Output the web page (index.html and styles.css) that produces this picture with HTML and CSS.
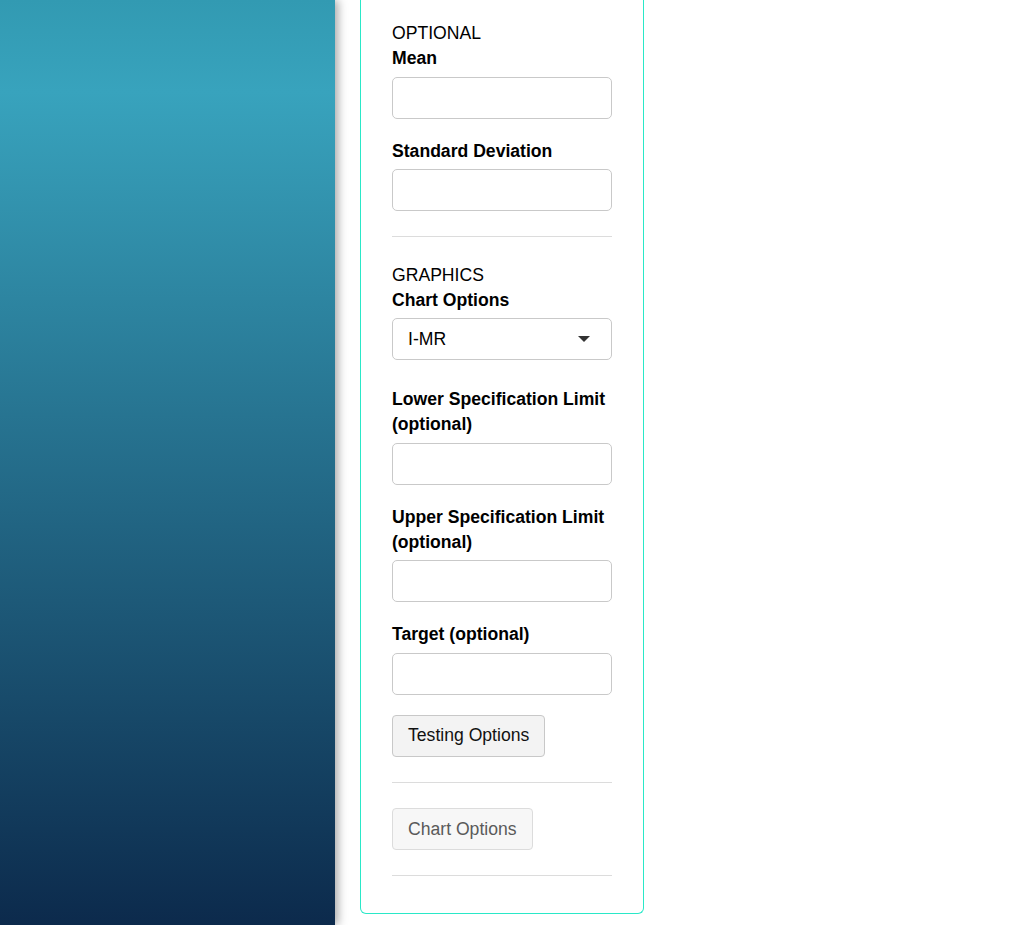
FILE: index.html
```html
<!DOCTYPE html>
<html>
<head>
<meta charset="utf-8">
<link rel="stylesheet" href="styles.css">
</head>
<body>
<div class="layout">
  <aside class="sidebar"></aside>
  <main class="main">
    <div class="panel">
      <div class="section-title">OPTIONAL</div>
      <label class="label">Mean</label>
      <input class="field" type="text">
      <label class="label">Standard Deviation</label>
      <input class="field" type="text">
      <hr class="rule">
      <div class="section-title">GRAPHICS</div>
      <label class="label">Chart Options</label>
      <div class="select">
        <span>I-MR</span>
        <svg class="caret" width="12" height="6" viewBox="0 0 12 6"><path d="M0 0h12L6 6z" fill="#333"/></svg>
      </div>
      <label class="label">Lower Specification Limit (optional)</label>
      <input class="field" type="text">
      <label class="label">Upper Specification Limit (optional)</label>
      <input class="field" type="text">
      <label class="label">Target (optional)</label>
      <input class="field" type="text">
      <div><button class="btn">Testing Options</button></div>
      <hr class="rule">
      <div><button class="btn btn-disabled">Chart Options</button></div>
      <hr class="rule">
    </div>
  </main>
</div>
</body>
</html>
```

FILE: styles.css
```css
html, body {
  margin: 0;
  padding: 0;
  background: #fff;
  font-family: "Liberation Sans", Arial, sans-serif;
  font-size: 17.6px;
  line-height: 25px;
  color: #000;
}
.layout {
  display: flex;
  height: 925px;
  overflow: hidden;
}
.sidebar {
  width: 335px;
  flex: none;
  background: linear-gradient(to bottom, #329ab2 0px, #38a3bd 92px, #0c2a4c 925px);
  box-shadow: 3px 0 9px rgba(0, 0, 0, 0.35);
  position: relative;
  z-index: 1;
}
.main {
  flex: 1;
  padding-left: 25px;
}
.panel {
  width: 220px;
  box-sizing: content-box;
  border: 1px solid #2ae8c8;
  border-top: none;
  border-radius: 0 0 6px 6px;
  padding: 21px 31px 0;
  height: 892px;
  display: flex;
  flex-direction: column;
}
.section-title {
  font-weight: normal;
}
.label {
  display: block;
  font-weight: bold;
  margin-bottom: 5.5px;
}
.field {
  display: block;
  width: 220px;
  height: 42px;
  flex: none;
  box-sizing: border-box;
  border: 1px solid #c9c9c9;
  border-radius: 5px;
  margin: 0 0 20px;
  padding: 0 15px;
  font: inherit;
}
.select {
  width: 220px;
  height: 42px;
  flex: none;
  box-sizing: border-box;
  border: 1px solid #c9c9c9;
  border-radius: 5px;
  margin-bottom: 27px;
  padding: 0 21px 0 15px;
  display: flex;
  align-items: center;
  justify-content: space-between;
}
.caret {
  display: block;
}
.rule {
  width: 220px;
  flex: none;
  border: 0;
  border-top: 1px solid #dcdcdc;
  margin: 5px 0 25.5px;
}
.btn {
  height: 42px;
  box-sizing: border-box;
  padding: 0 15px;
  font: inherit;
  color: #111;
  background: #f3f3f3;
  border: 1px solid #c8c8c8;
  border-radius: 4px;
  margin-bottom: 20px;
}
.btn-disabled {
  color: #5a5a5a;
  background: #f7f7f7;
  border-color: #dcdcdc;
}
```
